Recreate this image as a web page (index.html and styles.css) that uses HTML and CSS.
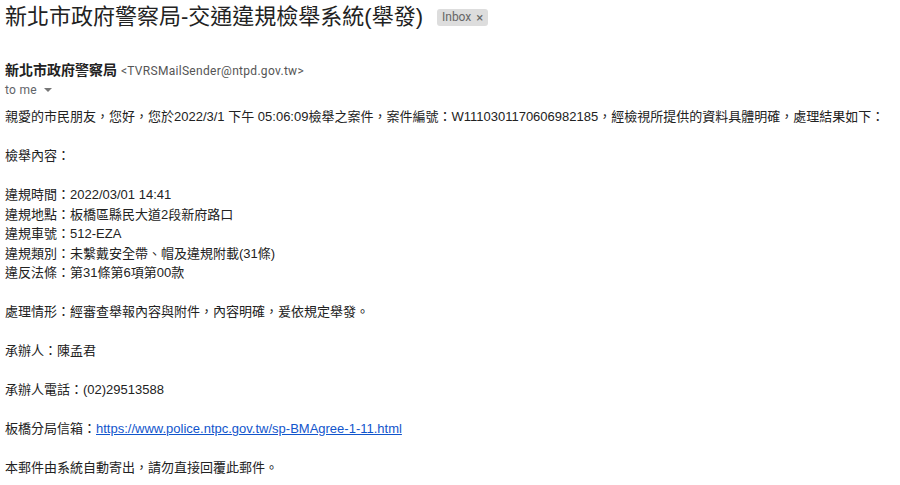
FILE: index.html
```html
<!DOCTYPE html>
<html lang="zh-Hant">
<head>
<meta charset="utf-8">
<title>新北市政府警察局-交通違規檢舉系統(舉發)</title>
<link rel="stylesheet" href="styles.css">
</head>
<body>
<div class="mail">
  <h1 class="subject">新北市政府警察局-交通違規檢舉系統(舉發)<span class="label">Inbox<span class="label-x">×</span></span></h1>
  <div class="sender"><span class="sender-name">新北市政府警察局</span> <span class="sender-addr">&lt;TVRSMailSender@ntpd.gov.tw&gt;</span></div>
  <div class="recipient">to me <span class="caret"></span></div>
  <div class="body">
    <p>親愛的市民朋友，您好，您於2022/3/1 下午 05:06:09檢舉之案件，案件編號：W1110301170606982185，經檢視所提供的資料具體明確，處理結果如下：</p>
    <p>檢舉內容：</p>
    <p>違規時間：2022/03/01 14:41<br>違規地點：板橋區縣民大道2段新府路口<br>違規車號：512-EZA<br>違規類別：未繫戴安全帶、帽及違規附載(31條)<br>違反法條：第31條第6項第00款</p>
    <p>處理情形：經審查舉報內容與附件，內容明確，爰依規定舉發。</p>
    <p>承辦人：陳孟君</p>
    <p>承辦人電話：(02)29513588</p>
    <p>板橋分局信箱：<a href="#">https://www.police.ntpc.gov.tw/sp-BMAgree-1-11.html</a></p>
    <p>本郵件由系統自動寄出，請勿直接回覆此郵件。</p>
  </div>
</div>
</body>
</html>
```

FILE: styles.css
```css
html, body {
  margin: 0;
  padding: 0;
  background: #fff;
}
.mail {
  padding: 3px 0 0 5px;
  font-family: "Liberation Sans", Arial, "Noto Sans CJK TC", sans-serif;
  color: #222;
}
.subject {
  margin: 0;
  font-size: 22px;
  font-weight: normal;
  line-height: 28px;
  color: #222;
  display: flex;
  align-items: center;
}
.label {
  display: inline-flex;
  align-items: center;
  margin-left: 14px;
  height: 17px;
  padding: 0 5px 0 5px;
  background: #ddd;
  color: #666;
  border-radius: 3px;
  font-family: Roboto, "Liberation Sans", sans-serif;
  font-size: 12px;
  line-height: 17px;
}
.label-x {
  margin-left: 5px;
  font-size: 13px;
  color: #666;
}
.sender {
  margin-top: 30px;
  line-height: 19px;
  font-size: 14px;
}
.sender-name {
  font-weight: bold;
  color: #222;
}
.sender-addr {
  font-family: Roboto, "Liberation Sans", sans-serif;
  font-size: 12px;
  letter-spacing: 0.3px;
  color: #555;
}
.recipient {
  font-family: Roboto, "Liberation Sans", sans-serif;
  font-size: 12px;
  letter-spacing: 0.3px;
  line-height: 18px;
  color: #5f6368;
  display: flex;
  align-items: center;
}
.caret {
  display: inline-block;
  margin-left: 7px;
  width: 0;
  height: 0;
  border-left: 4px solid transparent;
  border-right: 4px solid transparent;
  border-top: 4px solid #777;
}
.body {
  margin-top: 8px;
  font-size: 13px;
  line-height: 19.5px;
  color: #222;
}
.body p {
  margin: 0 0 19.5px 0;
}
.body a {
  color: #15c;
  text-decoration: underline;
}
```
